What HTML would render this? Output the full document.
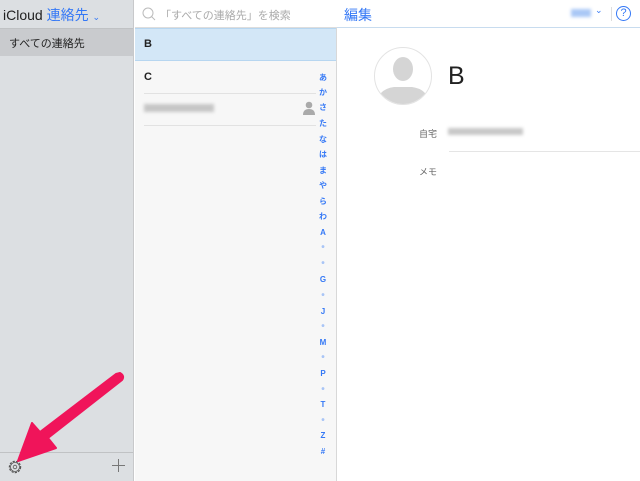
<!DOCTYPE html><html><head><meta charset="utf-8"><style>
body{margin:0;width:640px;height:481px;overflow:hidden;font-family:"Liberation Sans","Noto Sans CJK JP",sans-serif;position:relative;background:#fff}
div{position:absolute;box-sizing:border-box}
.idx{position:absolute;left:315px;width:16px;text-align:center;font-size:8px;color:#3478f6;font-weight:bold;line-height:8px}
.d{color:#a9c5f6;font-size:10px}
</style></head><body>
<div style="left:0;top:0;width:134px;height:481px;background:#dcdfe2;border-right:1px solid #c8c9cb"></div>
<div style="left:3px;top:5px;font-size:14px;color:#222">iCloud <span style="color:#3478f6">連絡先</span> <span style="color:#3478f6;font-size:9px">⌄</span></div>
<div style="left:0;top:28px;width:133px;height:28px;background:#c9cbce;border-top:1px solid #c0c2c4"></div>
<div style="left:9px;top:35px;font-size:11px;color:#222">すべての連絡先</div>
<div style="left:0;top:452px;width:133px;height:1px;background:#c0c2c4"></div>
<svg style="position:absolute;left:7px;top:459px" width="16" height="16" viewBox="0 0 16 16"><circle cx="8" cy="8" r="5.6" fill="none" stroke="#555" stroke-width="1.2" stroke-dasharray="2.2 1.2"/><circle cx="8" cy="8" r="4.5" fill="none" stroke="#555" stroke-width="0.8"/><circle cx="8" cy="8" r="1.8" fill="none" stroke="#555" stroke-width="0.8"/></svg>
<div style="left:112px;top:465px;width:13px;height:1px;background:#777"></div>
<div style="left:118px;top:459px;width:1px;height:13px;background:#777"></div>
<div style="left:135px;top:0;width:202px;height:481px;background:#f7f7f7;border-right:1px solid #d8d8d8"></div>
<div style="left:135px;top:0;width:202px;height:28px;background:#fff;border-bottom:1px solid #ddd"></div>
<svg style="position:absolute;left:142px;top:7px" width="14" height="14"><circle cx="6" cy="6" r="5" fill="none" stroke="#bbb" stroke-width="1"/><line x1="9.5" y1="9.5" x2="13" y2="13" stroke="#bbb"/></svg>
<div style="left:160px;top:7px;font-size:11px;color:#aaa">「すべての連絡先」を検索</div>
<div style="left:135px;top:28px;width:201px;height:33px;background:#d3e7f7;border-bottom:1px solid #b7d6f0;border-top:1px solid #b7d6f0"></div>
<div style="left:144px;top:38px;font-size:11px;font-weight:bold;color:#222">B</div>
<div style="left:144px;top:71px;font-size:11px;font-weight:bold;color:#222">C</div>
<div style="left:144px;top:93px;width:172px;height:1px;background:#e2e2e2"></div>
<div style="left:144px;top:104px;width:70px;height:8px;background:#c6c6c6;filter:blur(1.5px)"></div>
<svg style="position:absolute;left:302px;top:101px" width="14" height="14"><circle cx="7" cy="4" r="3.3" fill="#aaa"/><path d="M1 14 Q1 8 7 8 Q13 8 13 14Z" fill="#aaa"/></svg>
<div style="left:144px;top:125px;width:172px;height:1px;background:#e2e2e2"></div>
<div class="idx" style="top:74px">あ</div><div class="idx" style="top:89px">か</div><div class="idx" style="top:104px">さ</div><div class="idx" style="top:120px">た</div><div class="idx" style="top:136px">な</div><div class="idx" style="top:151px">は</div><div class="idx" style="top:167px">ま</div><div class="idx" style="top:182px">や</div><div class="idx" style="top:198px">ら</div><div class="idx" style="top:213px">わ</div><div class="idx" style="top:229px">A</div><div class="idx d" style="top:244px">•</div><div class="idx d" style="top:260px">•</div><div class="idx" style="top:276px">G</div><div class="idx d" style="top:292px">•</div><div class="idx" style="top:308px">J</div><div class="idx d" style="top:323px">•</div><div class="idx" style="top:339px">M</div><div class="idx d" style="top:354px">•</div><div class="idx" style="top:370px">P</div><div class="idx d" style="top:386px">•</div><div class="idx" style="top:401px">T</div><div class="idx d" style="top:417px">•</div><div class="idx" style="top:432px">Z</div><div class="idx" style="top:448px">#</div>
<div style="left:337px;top:27px;width:303px;height:1px;background:#c8dcef"></div>
<div style="left:344px;top:5px;font-size:14px;color:#3478f6">編集</div>
<div style="left:571px;top:9px;width:20px;height:8px;background:#aac8f6;filter:blur(1.5px)"></div>
<div style="left:595px;top:5px;font-size:9px;color:#3478f6">⌄</div>
<div style="left:611px;top:7px;width:1px;height:14px;background:#ddd"></div>
<div style="left:616px;top:6px;width:15px;height:15px;border:1px solid #3478f6;border-radius:50%;color:#3478f6;font-size:11px;text-align:center;line-height:13px">?</div>
<svg style="position:absolute;left:374px;top:47px" width="58" height="58"><defs><clipPath id="c"><circle cx="29" cy="29" r="28"/></clipPath></defs><circle cx="29" cy="29" r="28.5" fill="#fff" stroke="#e3e3e3"/><g clip-path="url(#c)" fill="#d5d5d5"><ellipse cx="29" cy="22" rx="10" ry="12"/><path d="M2 58 Q4 42 20 40 L38 40 Q54 42 56 58Z"/></g></svg>
<div style="left:448px;top:62px;font-size:25px;color:#222">B</div>
<div style="left:419px;top:127px;font-size:9px;color:#666">自宅</div>
<div style="left:448px;top:128px;width:75px;height:7px;background:#c8c8c8;filter:blur(1.5px)"></div>
<div style="left:449px;top:151px;width:191px;height:1px;background:#e5e5e5"></div>
<div style="left:419px;top:165px;font-size:9px;color:#666">メモ</div>
<svg style="position:absolute;left:0;top:370px" width="130" height="100"><path d="M120 3 Q125 6 122 10 L48 68 L56 78 L18 91 L32 53 L40 62 L116 4Z" fill="#f0145a" stroke="#f0145a" stroke-width="2" stroke-linejoin="round"/></svg>
</body></html>
